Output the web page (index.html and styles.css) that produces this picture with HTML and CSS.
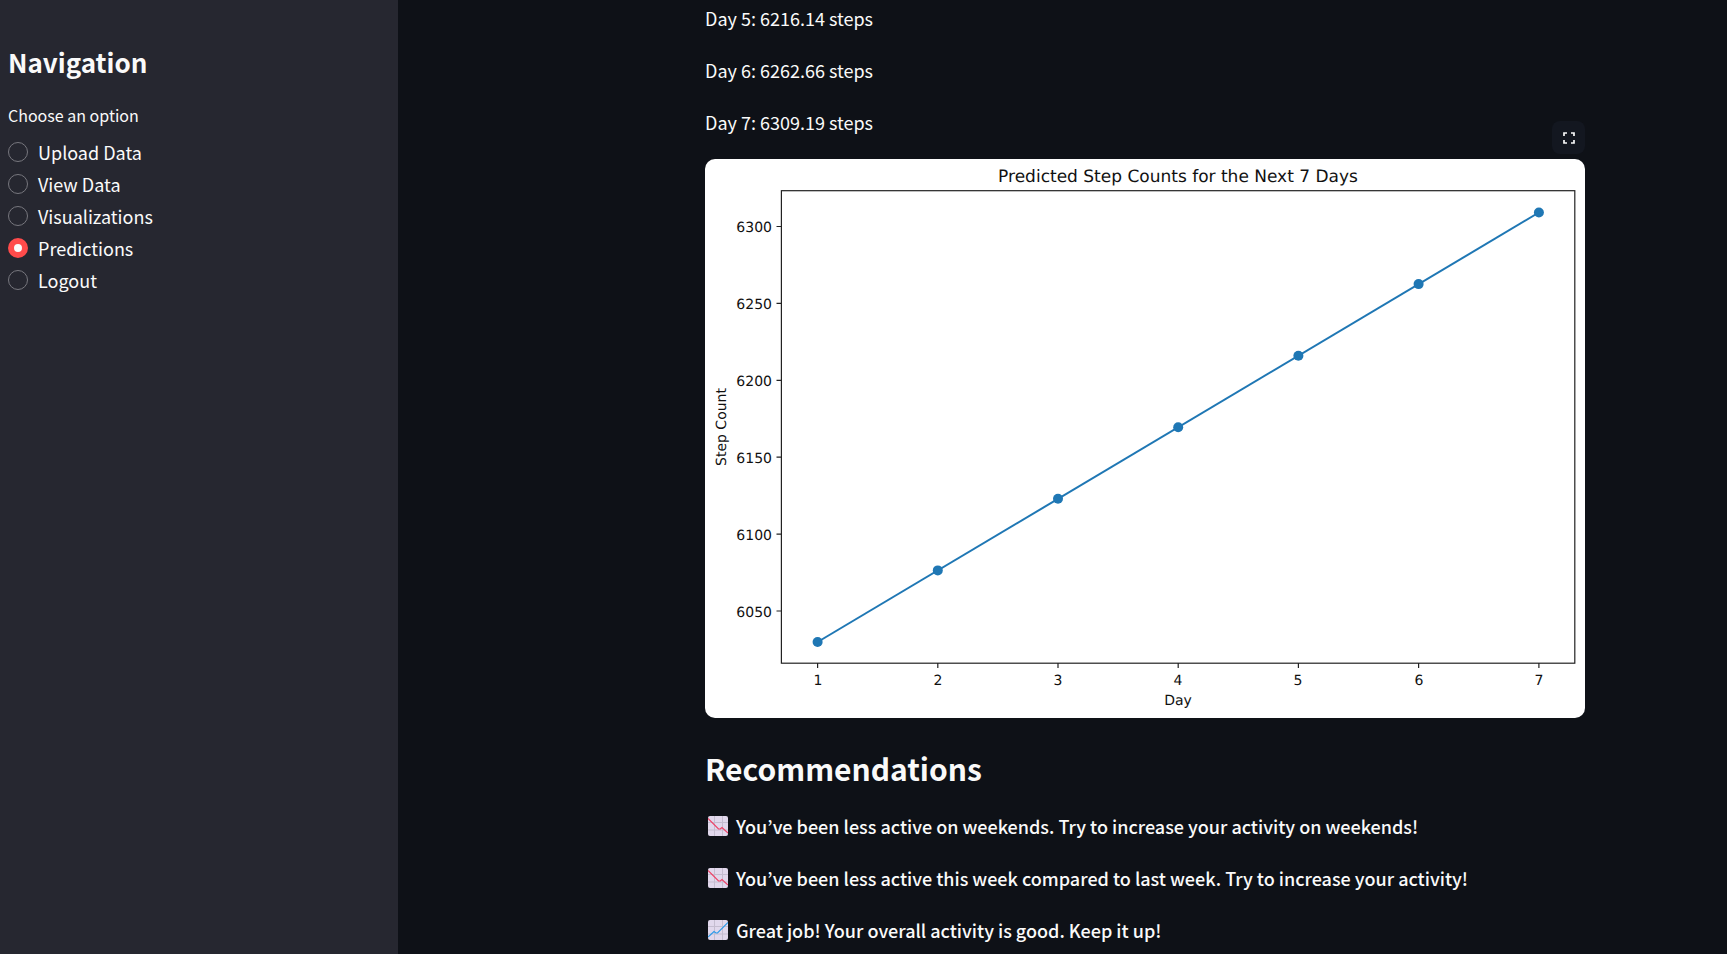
FILE: index.html
```html
<!DOCTYPE html>
<html lang="en">
<head>
<meta charset="utf-8">
<title>Step Predictions</title>
<link rel="stylesheet" href="styles.css">
</head>
<body>
<div class="app">
  <aside class="sidebar">
    <h2 class="sidebar-title">Navigation</h2>
    <form>
      <fieldset class="options">
        <legend class="options-label">Choose an option</legend>
        <label class="option"><input type="radio" name="page">Upload Data</label>
        <label class="option"><input type="radio" name="page">View Data</label>
        <label class="option"><input type="radio" name="page">Visualizations</label>
        <label class="option"><input type="radio" name="page" checked>Predictions</label>
        <label class="option"><input type="radio" name="page">Logout</label>
      </fieldset>
    </form>
  </aside>
  <main class="main">
    <div class="content">
      <p>Day 5: 6216.14 steps</p>
      <p>Day 6: 6262.66 steps</p>
      <p>Day 7: 6309.19 steps</p>
      <figure class="chart">
        <button class="fullscreen" type="button" aria-label="View fullscreen">
          <svg viewBox="0 0 12 12" width="12" height="12"><path d="M1 4V1H4M8 1H11V4M11 8V11H8M4 11H1V8" fill="none" stroke="#fafafa" stroke-width="1.7"/></svg>
        </button>
        <svg class="plot" viewBox="0 0 880 559" role="img" aria-label="Predicted step counts line chart">
          <g class="axes">
            <rect x="76.4" y="31.7" width="793.4" height="472.5"/>
            <path d="M71.5 67.5h5M71.5 144.4h5M71.5 221.3h5M71.5 298.2h5M71.5 375.1h5M71.5 452h5"/>
            <path d="M112.6 504v5M232.8 504v5M353 504v5M473.2 504v5M593.4 504v5M713.6 504v5M833.9 504v5"/>
          </g>
          <path class="series" d="M112.6 483L833.9 53.5"/>
          <g class="points">
            <circle cx="112.6" cy="483" r="5"/><circle cx="232.8" cy="411.4" r="5"/><circle cx="353" cy="339.8" r="5"/><circle cx="473.2" cy="268.2" r="5"/><circle cx="593.4" cy="196.7" r="5"/><circle cx="713.6" cy="125.1" r="5"/><circle cx="833.9" cy="53.5" r="5"/>
          </g>
          <text class="plot-title" x="473" y="23">Predicted Step Counts for the Next 7 Days</text>
          <g class="y-ticks">
            <text x="67" y="73">6300</text><text x="67" y="150">6250</text><text x="67" y="227">6200</text><text x="67" y="304">6150</text><text x="67" y="381">6100</text><text x="67" y="458">6050</text>
          </g>
          <g class="x-ticks">
            <text x="113" y="526">1</text><text x="233" y="526">2</text><text x="353" y="526">3</text><text x="473" y="526">4</text><text x="593" y="526">5</text><text x="714" y="526">6</text><text x="834" y="526">7</text>
            <text x="473" y="546">Day</text>
            <text transform="translate(21 268) rotate(-90)">Step Count</text>
          </g>
        </svg>
      </figure>
      <h2 class="heading">Recommendations</h2>
      <p class="tip"><svg class="emoji" viewBox="0 0 20 20"><rect width="20" height="20" rx="2" fill="#e1d8ec"/><path d="M6.5 0V20M14.5 0V20M0 6.5H20M0 14H20" stroke="#c5bdd0" fill="none"/><path d="M0 2.5L10.5 13L12.3 13L14 11.5L20 17" stroke="#ee4266" fill="none" stroke-width="1.2"/></svg>You’ve been less active on weekends. Try to increase your activity on weekends!</p>
      <p class="tip"><svg class="emoji" viewBox="0 0 20 20"><rect width="20" height="20" rx="2" fill="#e1d8ec"/><path d="M6.5 0V20M14.5 0V20M0 6.5H20M0 14H20" stroke="#c5bdd0" fill="none"/><path d="M0 2.5L10.5 13L12.3 13L14 11.5L20 17" stroke="#ee4266" fill="none" stroke-width="1.2"/></svg>You’ve been less active this week compared to last week. Try to increase your activity!</p>
      <p class="tip"><svg class="emoji" viewBox="0 0 20 20"><rect width="20" height="20" rx="2" fill="#e1d8ec"/><path d="M6.5 0V20M14.5 0V20M0 6.5H20M0 14H20" stroke="#c5bdd0" fill="none"/><path d="M0 17L6 11.5L8 13L9.5 13L20 2.5" stroke="#2d9bea" fill="none" stroke-width="1.2"/></svg>Great job! Your overall activity is good. Keep it up!</p>
    </div>
  </main>
</div>
</body>
</html>
```
FILE: styles.css
```css
* { box-sizing: border-box; }
body {
  margin: 0;
  background: #0e1117;
  color: #fafafa;
  font: 18px/30px "Noto Sans CJK KR", "Open Sans", sans-serif;
}
h2, p, figure, fieldset { margin: 0; }
.app { display: flex; min-height: 100vh; }
.sidebar {
  flex: 0 0 398px;
  padding: 44px 8px;
  background: #262730;
}
.sidebar-title { font-size: 26px; line-height: 36px; font-weight: 700; }
.options { border: 0; padding: 0; margin-top: 20px; }
.options-label { padding: 0; font-size: 16px; line-height: 30px; margin-bottom: 6px; }
.option { display: flex; align-items: center; gap: 10px; line-height: 32px; }
.option input {
  appearance: none;
  width: 20px;
  height: 20px;
  margin: 0;
  border: 1px solid #77777e;
  border-radius: 50%;
}
.option input:checked { border: 6px solid #ff4b4b; background: #fafafa; }
.main { flex: 1; min-width: 0; padding: 3px 0 0 165px; }
.content {
  display: flex;
  flex-direction: column;
  gap: 22px;
  max-width: 880px;
  margin: 0 auto;
}
.chart { position: relative; }
.plot {
  display: block;
  width: 100%;
  background: #fff;
  border-radius: 10px;
  font: 14px "DejaVu Sans", sans-serif;
  text-rendering: geometricPrecision;
}
.axes { fill: none; stroke: #222; stroke-width: 1.2; }
.series { stroke: #1f77b4; stroke-width: 2; }
.points { fill: #1f77b4; }
.plot text { fill: #111; }
.plot-title { font-size: 17px; text-anchor: middle; }
.y-ticks { text-anchor: end; }
.x-ticks { text-anchor: middle; }
.fullscreen {
  position: absolute;
  right: 0;
  bottom: 100%;
  display: grid;
  place-items: center;
  width: 33px;
  height: 33px;
  margin-bottom: 5px;
  padding: 0;
  border: 0;
  border-radius: 8px;
  background: #131720;
}
.heading { padding-top: 7px; font-size: 30px; line-height: 42px; font-weight: 700; }
.tip { display: flex; align-items: center; gap: 8px; padding-left: 3px; font-weight: 500; }
.emoji { flex: none; width: 20px; height: 20px; }
```
